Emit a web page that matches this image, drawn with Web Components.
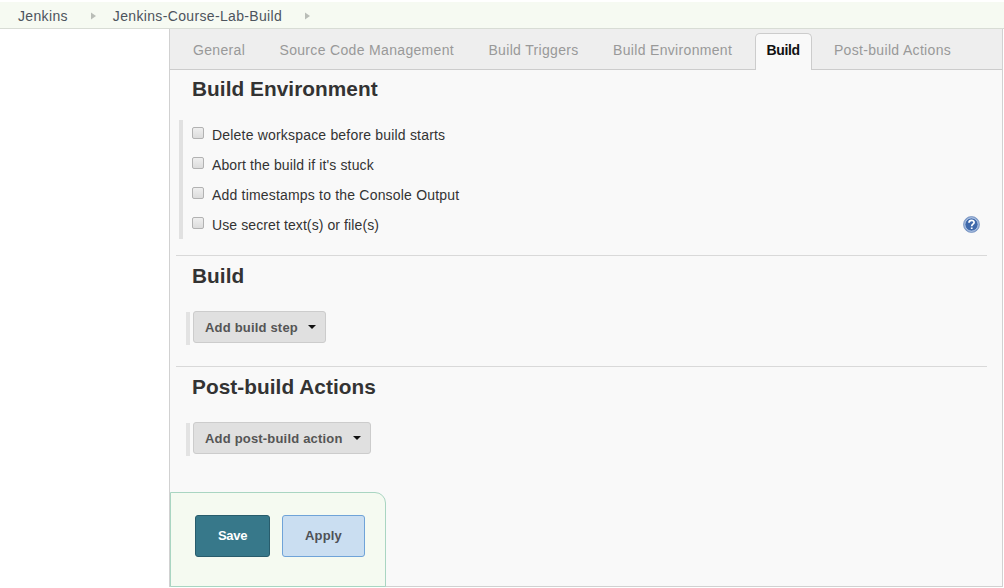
<!DOCTYPE html>
<html lang="en">
<head>
<meta charset="utf-8">
<title>Jenkins-Course-Lab-Build Config</title>
<style>
body { margin: 0; background: #fff; font-family: "Liberation Sans", Arial, sans-serif; font-size: 14px; color: #333; overflow: hidden; }
</style>
</head>
<body>
<jenkins-config></jenkins-config>
<script>
const define = (name, html) => customElements.define(name, class extends HTMLElement {
  constructor() {
    super();
    this.attachShadow({ mode: 'open' }).innerHTML = html;
  }
});

define('jk-crumb', `<style>
:host { display: flex; align-items: center; height: 28px; white-space: nowrap; color: #4d545d; letter-spacing: .34px; }
svg { display: block; margin-left: 23px; margin-right: 17px; }
</style><slot></slot><svg width="5" height="8" viewBox="0 0 5 8"><path d="M0 0.5 L5 4 L0 7.5Z" fill="#b9bdb7"/></svg>`);

define('jk-breadcrumbs', `<style>
:host { display: flex; box-sizing: border-box; height: 27px; margin-top: 2px; padding: 0 0 0 18px; background: #f6faf2; border-bottom: 1px solid #d8dcd5; }
</style><slot></slot>`);

define('jk-tab', `<style>
:host { display: block; box-sizing: border-box; height: 37px; padding: 0 11px; border: 1px solid transparent; border-bottom: 0; line-height: 33px; color: #999; white-space: nowrap; letter-spacing: .33px; }
:host([active]) { background: #f9f9f9; border-color: #ccc; border-radius: 5px 5px 0 0; color: #111; font-weight: bold; letter-spacing: -.4px; }
</style><slot></slot>`);

define('jk-tabs', `<style>
:host { display: flex; box-sizing: border-box; height: 41px; padding: 4px 0 0 11px; gap: 10.35px; background: #eee; border-bottom: 1px solid #ccc; }
</style><slot></slot>`);

define('jk-heading', `<style>
:host { display: block; height: 24px; line-height: 24px; font-size: 20.8px; letter-spacing: .05px; font-weight: bold; color: #333; padding-left: 16px; white-space: nowrap; }
</style><slot></slot>`);

define('jk-check', `<style>
:host { display: flex; height: 30px; line-height: 30px; white-space: nowrap; letter-spacing: var(--spacing, .19px); }
i { box-sizing: border-box; width: 12px; height: 12px; margin: 7px 8px 0 0; border: 1px solid #b2b2b2; border-radius: 2px; background: linear-gradient(#efefef, #dcdcdc); }
.help { margin-left: auto; }
</style><i></i><span><slot></slot></span><span class="help"><slot name="help"></slot></span>`);

define('jk-help', `<style>
:host { display: block; padding: 6px 7px 0 0; }
svg { display: block; }
</style><svg width="17" height="17" viewBox="0 0 17 17"><circle cx="8.5" cy="8.5" r="8" fill="#89a5d1" stroke="#6d8bbb" stroke-width=".7"/><circle cx="8.5" cy="8.5" r="6.6" fill="#3f69ab" stroke="#c5d4eb" stroke-width=".8"/><path d="M6 6.7 C6 3.5 11.3 3.6 11.1 6.5 C11 8.3 8.7 8.1 8.7 10.2 M8.7 11.4 V13" fill="none" stroke="#fff" stroke-width="1.7"/></svg>`);

define('jk-dropdown', `<style>
:host { display: flex; height: 34px; }
.bar { width: 4px; height: 33px; background: #e3e3e3; margin: 1px 3px 0 0; }
button { box-sizing: border-box; display: flex; align-items: center; height: 32px; margin: 0; padding: 1px 9px 0 11px; font: bold 13px "Liberation Sans", Arial, sans-serif; letter-spacing: .19px; background: #e0e0e0; border: 1px solid #ccc; border-radius: 3px; white-space: nowrap; color: #555; }
svg { display: block; margin: 0 0 1px 10.5px; }
</style><span class="bar"></span><button><slot></slot><svg width="8" height="4" viewBox="0 0 8 4"><path d="M0 0H8L4 4Z" fill="#111"/></svg></button>`);

define('jk-button', `<style>
:host { display: block; }
button { display: block; box-sizing: border-box; width: var(--w); height: 42px; padding: 0 0 2px; margin: 0; font: bold 13px "Liberation Sans", Arial, sans-serif; letter-spacing: var(--spacing); color: #4f5156; background: #cadef1; border: 1px solid #6fa3d8; border-radius: 3px; }
:host([primary]) button { color: #fff; background: #37788a; border-color: #285c6c; }
</style><button><slot></slot></button>`);

define('jenkins-config', `<style>
:host { display: flex; flex-direction: column; height: 588px; box-sizing: border-box; }
main { display: flex; flex-direction: column; box-sizing: border-box; width: 834px; height: 558px; margin-left: 169px; border: solid #d1d1d1; border-width: 0 1px 1px; background: #f9f9f9; }
section { margin: 0 15px 0 6px; }
section + section { border-top: 1px solid #d9d9d9; }
.checks { margin: 19px 0 16px 3px; padding-left: 9px; height: 119px; border-left: 4px solid #e1e1e1; }
jk-dropdown { margin: 23px 0 0 10px; }
footer { box-sizing: border-box; display: flex; gap: 12px; width: 216px; height: 95px; margin: auto 0 -1px 0; padding: 22px 0 0 24px; background: #f5faf1; border: 1px solid #a9d5c2; border-radius: 0 11px 0 0; }
</style>
<jk-breadcrumbs><jk-crumb>Jenkins</jk-crumb><jk-crumb>Jenkins-Course-Lab-Build</jk-crumb></jk-breadcrumbs>
<main>
<jk-tabs><jk-tab>General</jk-tab><jk-tab>Source Code Management</jk-tab><jk-tab>Build Triggers</jk-tab><jk-tab>Build Environment</jk-tab><jk-tab active>Build</jk-tab><jk-tab>Post-build Actions</jk-tab></jk-tabs>
<section style="padding-top:7px">
<jk-heading>Build Environment</jk-heading>
<div class="checks">
<jk-check>Delete workspace before build starts</jk-check>
<jk-check style="--spacing:.12px">Abort the build if it's stuck</jk-check>
<jk-check>Add timestamps to the Console Output</jk-check>
<jk-check style="--spacing:.1px">Use secret text(s) or file(s)<jk-help slot="help"></jk-help></jk-check>
</div></section>
<section style="height:102px;padding-top:8px"><jk-heading>Build</jk-heading><jk-dropdown>Add build step</jk-dropdown></section>
<section style="padding-top:8px"><jk-heading>Post-build Actions</jk-heading><jk-dropdown>Add post-build action</jk-dropdown></section>
<footer><jk-button primary style="--w:75px;--spacing:-.3px">Save</jk-button><jk-button style="--w:83px;--spacing:.2px">Apply</jk-button></footer>
</main>`);
</script>
</body>
</html>
